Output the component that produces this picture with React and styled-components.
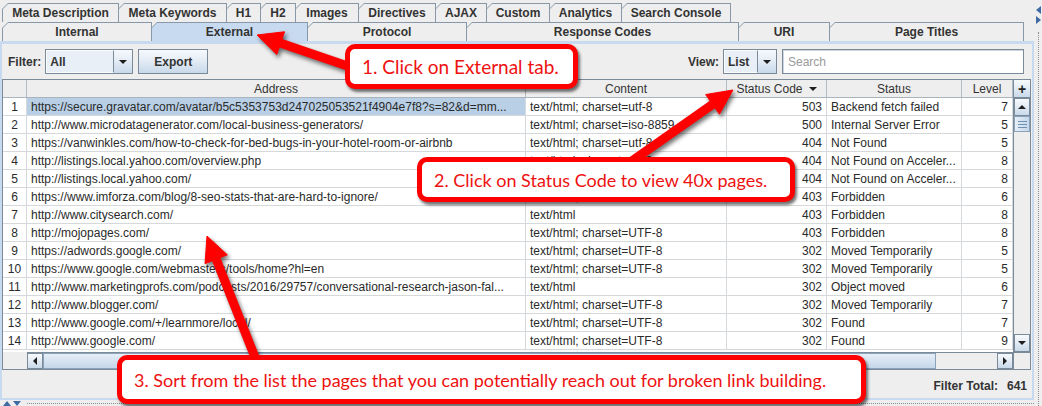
import React from 'react';
import styled, { createGlobalStyle } from 'styled-components';

const GlobalStyle = createGlobalStyle`
  html, body {
    margin: 0;
    padding: 0;
    background: #eeeeee;
  }
  body {
    font-family: "Liberation Sans", Arial, sans-serif;
    font-size: 12px;
    color: #333333;
  }
`;

const BORDER = '#7a8a99';
const GRID = '#d6d9dc';
const BTN_GRADIENT = 'linear-gradient(#f7fafd 0%, #e4ecf5 45%, #c9d9ea 100%)';

const Window = styled.div`
  position: relative;
  width: 1042px;
  height: 406px;
  overflow: hidden;
  display: flex;
  background: #eeeeee;
`;

const Main = styled.div`
  width: 1034px;
  flex: none;
  display: flex;
  flex-direction: column;
`;

/* ---------- tabs ---------- */

const TabStrip = styled.div`
  padding: 3px 0 0 2px;
  display: flex;
  flex-direction: column;
`;

const TabRow = styled.div`
  display: flex;
  height: 19px;
`;

const Tab = styled.div`
  width: ${p => p.$w}px;
  flex: none;
  box-sizing: border-box;
  padding: 1px 1px 0 1px;
  background: #8898a9;
  clip-path: polygon(6px 0, 100% 0, 100% 100%, 0 100%, 0 6px);

  & + & {
    margin-left: -1px;
  }
`;

const TabFace = styled.div`
  height: 100%;
  display: flex;
  align-items: center;
  justify-content: center;
  background: ${p => (p.$active ? '#c8daf0' : '#eeeeee')};
  clip-path: polygon(5px 0, 100% 0, 100% 100%, 0 100%, 0 5px);
  font-weight: bold;
  font-size: 12px;
  color: #333333;
  padding-bottom: 1px;
  box-sizing: border-box;
`;

/* ---------- main panel ---------- */

const Panel = styled.div`
  height: 359px;
  box-sizing: border-box;
  border: 2px solid #c8daf0;
  border-top-width: 3px;
  display: flex;
  flex-direction: column;
`;

const Toolbar = styled.div`
  height: 35px;
  flex: none;
  display: flex;
  align-items: center;
  padding: 0 8px 0 6px;
`;

const Label = styled.span`
  font-weight: bold;
  color: #333;
  margin-right: 4px;
`;

const Spacer = styled.div`
  flex: 1;
`;

const Combo = styled.div`
  display: flex;
  width: ${p => p.$w}px;
  height: 25px;
  box-sizing: border-box;
  border: 1px solid ${BORDER};
  background: #e8eff7;
  margin-right: 5px;
`;

const ComboValue = styled.div`
  flex: 1;
  display: flex;
  align-items: center;
  padding-left: 3px;
  font-weight: bold;
  border: 1px solid #fafcfe;
  border-right: 1px solid ${BORDER};
`;

const ComboArrow = styled.div`
  width: 18px;
  display: flex;
  align-items: center;
  justify-content: center;
  background: ${BTN_GRADIENT};
`;

const Tri = styled.span`
  width: 0;
  height: 0;
  border-left: ${p => p.$s || 4}px solid transparent;
  border-right: ${p => p.$s || 4}px solid transparent;
  ${p => (p.$up ? 'border-bottom' : 'border-top')}: ${p => p.$s || 4}px solid #1e1e1e;
`;

const SideTri = styled.span`
  width: 0;
  height: 0;
  border-top: 4px solid transparent;
  border-bottom: 4px solid transparent;
  ${p => (p.$left ? 'border-right' : 'border-left')}: 4px solid #1e1e1e;
`;

const Button = styled.div`
  width: 70px;
  height: 25px;
  box-sizing: border-box;
  border: 1px solid ${BORDER};
  background: ${BTN_GRADIENT};
  display: flex;
  align-items: center;
  justify-content: center;
  font-weight: bold;
`;

const Search = styled.div`
  width: 242px;
  height: 25px;
  box-sizing: border-box;
  border: 1px solid ${BORDER};
  box-shadow: inset 1px 1px 0 #cfd6dd;
  background: #ffffff;
  display: flex;
  align-items: center;
  padding-left: 5px;
  color: #9a9a9a;
  font-size: 12px;
`;

/* ---------- table ---------- */

const COLS = '24px 499px 201px 100px 135px 51px';

const TableFrame = styled.div`
  display: grid;
  grid-template-columns: 1010px 17px;
  grid-template-rows: 18px 254px 17px;
  border: 1px solid ${BORDER};
  margin-right: 1px;
  background: #eeeeee;
`;

const HeaderRow = styled.div`
  display: grid;
  grid-template-columns: ${COLS};
  background: #eeeeee;
  border-bottom: 1px solid #a9b4be;
`;

const HeaderCell = styled.div`
  display: flex;
  align-items: center;
  justify-content: center;
  gap: 6px;
  padding-top: 1px;
  border-right: 1px solid #b3bcc5;
  color: #333;
  white-space: nowrap;
`;

const PlusButton = styled.div`
  background: ${BTN_GRADIENT};
  border-left: 1px solid ${BORDER};
  border-bottom: 1px solid ${BORDER};
  display: flex;
  align-items: center;
  justify-content: center;
  font-weight: bold;
  font-size: 14px;
  color: #222;
`;

const Body = styled.div`
  background: #ffffff;
  overflow: hidden;
`;

const Row = styled.div`
  display: grid;
  grid-template-columns: ${COLS};
  height: 18px;
`;

const Cell = styled.div`
  box-sizing: border-box;
  border-right: 1px solid ${GRID};
  border-bottom: 1px solid ${GRID};
  padding: 1px 4px 0;
  line-height: 16px;
  white-space: nowrap;
  overflow: hidden;
  text-align: ${p => p.$align || 'left'};
  color: #2a2a2a;
  background: ${p => (p.$selected ? '#b8cfe5' : '#ffffff')};
`;

const VScroll = styled.div`
  display: flex;
  flex-direction: column;
  border-left: 1px solid ${BORDER};
  background: #eeeeee;
`;

const HScroll = styled.div`
  display: flex;
  border-top: 1px solid ${BORDER};
  background: #eeeeee;
  margin-left: 24px;
`;

const ScrollBtn = styled.div`
  flex: none;
  ${p => (p.$horizontal ? 'width: 16px;' : 'height: 18px;')}
  background: ${BTN_GRADIENT};
  border: 1px solid ${BORDER};
  box-sizing: border-box;
  display: flex;
  align-items: center;
  justify-content: center;
`;

const Thumb = styled.div`
  flex: none;
  ${p => (p.$horizontal ? `width: ${p.$size}px;` : `height: ${p.$size}px;`)}
  box-sizing: border-box;
  border: 1px solid #8aa2bb;
  background: ${p =>
    p.$horizontal
      ? 'linear-gradient(#e6eef7, #c5d7ea)'
      : 'linear-gradient(90deg, #e6eef7, #c5d7ea)'};
  display: flex;
  align-items: center;
  justify-content: center;
`;

const Grip = styled.div`
  width: 9px;
  height: 5px;
  border-top: 1px solid #6f8fb3;
  border-bottom: 1px solid #6f8fb3;
  position: relative;

  &::after {
    content: '';
    position: absolute;
    left: 0;
    right: 0;
    top: 2px;
    border-top: 1px solid #6f8fb3;
  }
`;

const Track = styled.div`
  flex: 1;
`;

const Corner = styled.div`
  border-top: 1px solid ${BORDER};
  border-left: 1px solid ${BORDER};
  background: #eeeeee;
`;

const StatusBar = styled.div`
  flex: 1;
  display: flex;
  align-items: center;
  justify-content: flex-end;
  gap: 9px;
  padding: 4px 5px 0 0;
  font-weight: bold;
  font-size: 12px;
`;

/* ---------- splitters ---------- */

const BottomSplit = styled.div`
  flex: 1;
  display: flex;
  align-items: flex-start;
  padding: 1px 0 0 3px;
  gap: 2px;
`;

const DotLine = styled.div`
  flex: 1;
  margin: 2px 0 0 4px;
  border-top: 1px dotted #8d8d8d;
`;

const SideSplit = styled.div`
  flex: 1;
  display: flex;
  flex-direction: column;
  align-items: center;
  padding-top: 6px;
  gap: 2px;
`;

const SideDots = styled.div`
  flex: 1;
  margin-top: 6px;
  border-left: 1px dotted #8d8d8d;
`;

const SplitArrow = styled.span`
  width: 0;
  height: 0;
  border-top: 4px solid transparent;
  border-bottom: 4px solid transparent;
  ${p => (p.$left ? 'border-right' : 'border-left')}: 5px solid #3f6aa3;
`;

const SplitArrowV = styled.span`
  width: 0;
  height: 0;
  border-left: 4px solid transparent;
  border-right: 4px solid transparent;
  ${p => (p.$up ? 'border-bottom' : 'border-top')}: 5px solid #3f6aa3;
`;

/* ---------- annotations ---------- */

const Callout = styled.div`
  position: absolute;
  left: ${p => p.$x}px;
  top: ${p => p.$y}px;
  width: ${p => p.$w}px;
  height: ${p => p.$h}px;
  box-sizing: border-box;
  border: 5px solid #ff0000;
  border-radius: 10px;
  background: #ffffff;
  box-shadow: 2px 3px 3px rgba(0, 0, 0, 0.55);
  display: flex;
  align-items: center;
  padding-left: 12px;
  font-family: Lato, "Open Sans", sans-serif;
  font-size: ${p => p.$size || 19}px;
  color: #ee1111;
  white-space: nowrap;
`;

const ArrowLayer = styled.svg`
  position: absolute;
  left: 0;
  top: 0;
  width: 1042px;
  height: 406px;
  pointer-events: none;
  filter: drop-shadow(2px 3px 2px rgba(0, 0, 0, 0.55));
`;

function Arrow({ from, to, width = 9, head = 25, spread = 24 }) {
  const dx = to[0] - from[0];
  const dy = to[1] - from[1];
  const len = Math.hypot(dx, dy);
  const ux = dx / len;
  const uy = dy / len;
  const nx = -uy;
  const ny = ux;
  const neck = [to[0] - ux * head, to[1] - uy * head];
  const pts = [
    to,
    [neck[0] + (nx * spread) / 2, neck[1] + (ny * spread) / 2],
    [neck[0] - (nx * spread) / 2, neck[1] - (ny * spread) / 2],
  ]
    .map(p => p.join(','))
    .join(' ');
  return (
    <g fill="#ff0000" stroke="#ff0000">
      <line
        x1={from[0]}
        y1={from[1]}
        x2={neck[0] + ux * 2}
        y2={neck[1] + uy * 2}
        strokeWidth={width}
        strokeLinecap="round"
      />
      <polygon points={pts} strokeWidth="1" strokeLinejoin="round" />
    </g>
  );
}

/* ---------- data ---------- */

const topTabs = [
  ['Meta Description', 117],
  ['Meta Keywords', 109],
  ['H1', 35],
  ['H2', 36],
  ['Images', 64],
  ['Directives', 78],
  ['AJAX', 52],
  ['Custom', 64],
  ['Analytics', 73],
  ['Search Console', 110],
];

const bottomTabs = [
  ['Internal', 150],
  ['External', 157],
  ['Protocol', 160],
  ['Response Codes', 273],
  ['URI', 92],
  ['Page Titles', 195],
];

const rows = [
  ['https://secure.gravatar.com/avatar/b5c5353753d247025053521f4904e7f8?s=82&d=mm...', 'text/html; charset=utf-8', 503, 'Backend fetch failed', 7],
  ['http://www.microdatagenerator.com/local-business-generators/', 'text/html; charset=iso-8859', 500, 'Internal Server Error', 5],
  ['https://vanwinkles.com/how-to-check-for-bed-bugs-in-your-hotel-room-or-airbnb', 'text/html; charset=utf-8', 404, 'Not Found', 5],
  ['http://listings.local.yahoo.com/overview.php', 'text/html; charset=utf-8', 404, 'Not Found on Acceler...', 8],
  ['http://listings.local.yahoo.com/', 'text/html; charset=utf-8', 404, 'Not Found on Acceler...', 8],
  ['https://www.imforza.com/blog/8-seo-stats-that-are-hard-to-ignore/', 'text/html; charset=UTF-8', 403, 'Forbidden', 6],
  ['http://www.citysearch.com/', 'text/html', 403, 'Forbidden', 8],
  ['http://mojopages.com/', 'text/html; charset=UTF-8', 403, 'Forbidden', 8],
  ['https://adwords.google.com/', 'text/html; charset=UTF-8', 302, 'Moved Temporarily', 5],
  ['https://www.google.com/webmasters/tools/home?hl=en', 'text/html; charset=UTF-8', 302, 'Moved Temporarily', 5],
  ['http://www.marketingprofs.com/podcasts/2016/29757/conversational-research-jason-fal...', 'text/html', 302, 'Object moved', 6],
  ['http://www.blogger.com/', 'text/html; charset=UTF-8', 302, 'Moved Temporarily', 7],
  ['http://www.google.com/+/learnmore/local/', 'text/html; charset=UTF-8', 302, 'Found', 7],
  ['http://www.google.com/', 'text/html; charset=UTF-8', 302, 'Found', 9],
];

const App = () => {
  return (
    <>
      <GlobalStyle />
      <Window>
        <Main>
          <TabStrip>
            <TabRow>
              {topTabs.map(([label, w]) => (
                <Tab key={label} $w={w}>
                  <TabFace>{label}</TabFace>
                </Tab>
              ))}
            </TabRow>
            <TabRow>
              {bottomTabs.map(([label, w]) => (
                <Tab key={label} $w={w}>
                  <TabFace $active={label === 'External'}>{label}</TabFace>
                </Tab>
              ))}
            </TabRow>
          </TabStrip>

          <Panel>
            <Toolbar>
              <Label>Filter:</Label>
              <Combo $w={88}>
                <ComboValue>All</ComboValue>
                <ComboArrow>
                  <Tri />
                </ComboArrow>
              </Combo>
              <Button>Export</Button>
              <Spacer />
              <Label>View:</Label>
              <Combo $w={54}>
                <ComboValue>List</ComboValue>
                <ComboArrow>
                  <Tri />
                </ComboArrow>
              </Combo>
              <Search>Search</Search>
            </Toolbar>

            <TableFrame>
              <HeaderRow>
                <HeaderCell />
                <HeaderCell>Address</HeaderCell>
                <HeaderCell>Content</HeaderCell>
                <HeaderCell>
                  Status Code <Tri $s={4} />
                </HeaderCell>
                <HeaderCell>Status</HeaderCell>
                <HeaderCell>Level</HeaderCell>
              </HeaderRow>
              <PlusButton>+</PlusButton>

              <Body>
                {rows.map((r, i) => (
                  <Row key={i}>
                    <Cell $align="center">{i + 1}</Cell>
                    <Cell $selected={i === 0}>{r[0]}</Cell>
                    <Cell>{r[1]}</Cell>
                    <Cell $align="right">{r[2]}</Cell>
                    <Cell>{r[3]}</Cell>
                    <Cell $align="right">{r[4]}</Cell>
                  </Row>
                ))}
              </Body>
              <VScroll>
                <ScrollBtn>
                  <Tri $up />
                </ScrollBtn>
                <Thumb $size={16}>
                  <Grip />
                </Thumb>
                <Track />
                <ScrollBtn>
                  <Tri />
                </ScrollBtn>
              </VScroll>

              <HScroll>
                <ScrollBtn $horizontal>
                  <SideTri $left />
                </ScrollBtn>
                <Thumb $horizontal $size={893} />
                <Track />
                <ScrollBtn $horizontal>
                  <SideTri />
                </ScrollBtn>
              </HScroll>
              <Corner />
            </TableFrame>

            <StatusBar>
              <span>Filter Total:</span>
              <span>641</span>
            </StatusBar>
          </Panel>

          <BottomSplit>
            <SplitArrowV $up />
            <SplitArrowV />
            <DotLine />
          </BottomSplit>
        </Main>

        <SideSplit>
          <SplitArrow $left />
          <SplitArrow />
          <SideDots />
        </SideSplit>

        <ArrowLayer viewBox="0 0 1042 406">
          <Arrow from={[365, 72]} to={[257, 35]} />
          <Arrow from={[612, 175]} to={[733, 90]} />
          <Arrow from={[262, 375]} to={[207, 236]} />
        </ArrowLayer>

        <Callout $x={345} $y={44} $w={233} $h={45} $size={19}>
          1. Click on External tab.
        </Callout>
        <Callout $x={417} $y={157} $w={378} $h={45} $size={18}>
          2. Click on Status Code to view 40x pages.
        </Callout>
        <Callout $x={117} $y={355} $w={749} $h={49} $size={18}>
          3. Sort from the list the pages that you can potentially reach out for broken link building.
        </Callout>
      </Window>
    </>
  );
};

export default App;
